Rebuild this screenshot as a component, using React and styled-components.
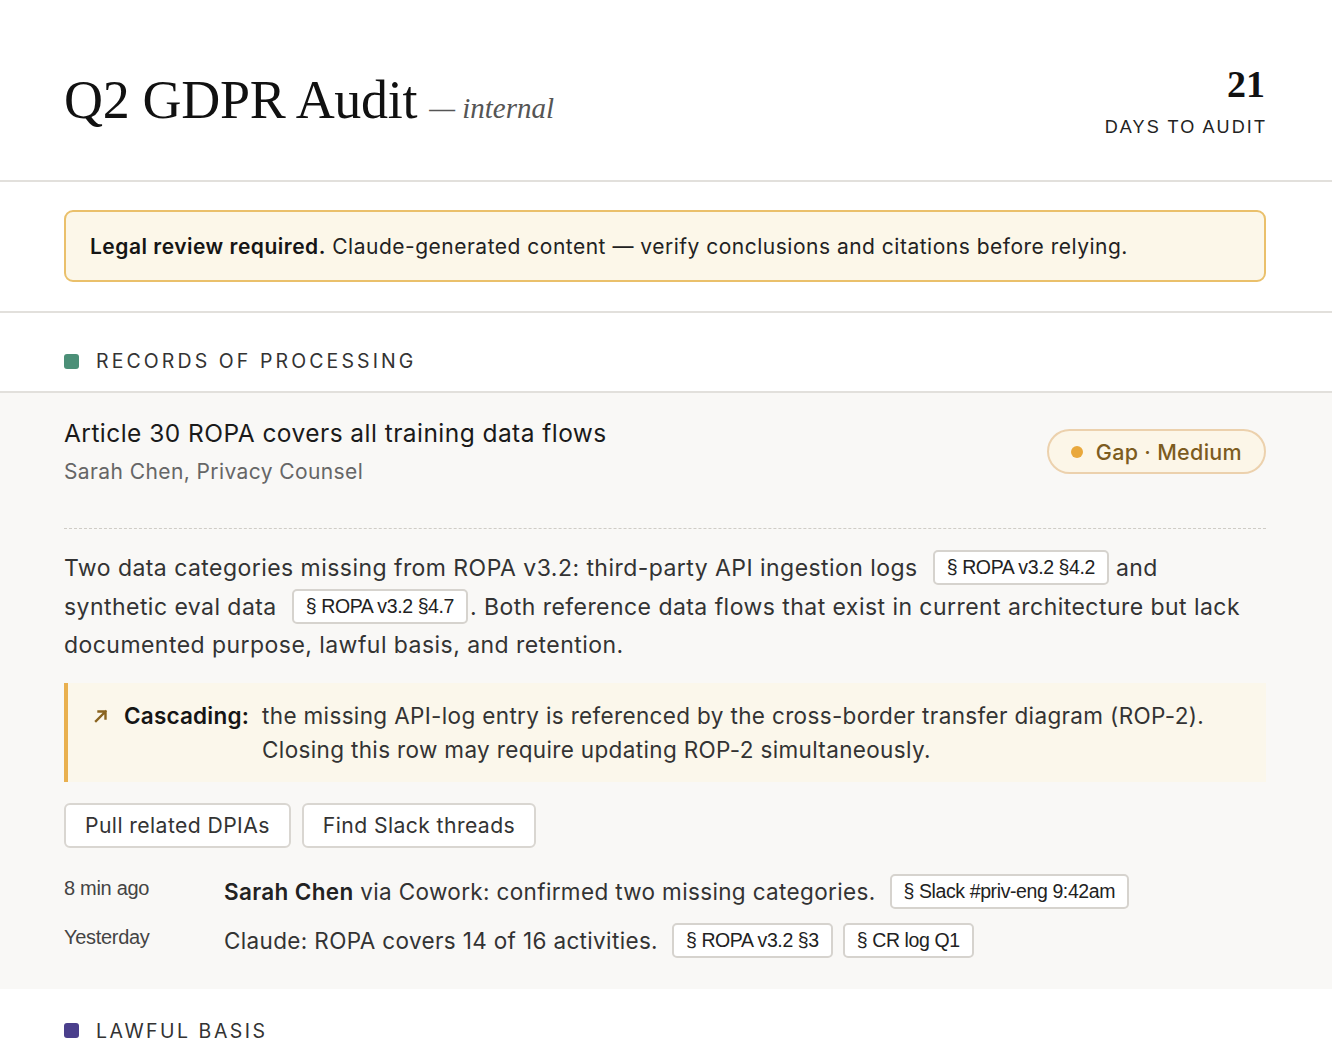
import React from "react";
import styled, { createGlobalStyle } from "styled-components";

const Global = createGlobalStyle`
  * { box-sizing: border-box; }
  html, body { margin: 0; padding: 0; background: #ffffff; }
  body {
    font-family: Inter, "Noto Sans", "Liberation Sans", sans-serif;
    color: #222;
    -webkit-font-smoothing: antialiased;
  }
`;

const Page = styled.div`
  width: 1332px;
  min-height: 1058px;
  overflow: hidden;
`;

const Header = styled.header`
  display: flex;
  justify-content: space-between;
  align-items: flex-start;
  padding: 65px 67px 42px 64px;
  border-bottom: 2px solid #e2e0dc;
`;

const Title = styled.h1`
  margin: 8px 0 0;
  font-family: Georgia, "Liberation Serif", "DejaVu Serif", serif;
  font-weight: 400;
  font-size: 54px;
  line-height: 1;
  color: #111;
  letter-spacing: -0.3px;
`;

const Sub = styled.span`
  font-style: italic;
  font-size: 29px;
  color: #555;
  margin-left: 12px;
  letter-spacing: 0;
`;

const Countdown = styled.div`
  display: flex;
  flex-direction: column;
  align-items: flex-end;
  gap: 14px;
`;

const Days = styled.div`
  font-family: Georgia, "Liberation Serif", serif;
  font-weight: 700;
  font-size: 38px;
  line-height: 1;
  color: #111;
`;

const DaysLabel = styled.div`
  font-family: "Liberation Sans", Arial, sans-serif;
  font-size: 18px;
  letter-spacing: 2.1px;
  margin-right: -2px;
  color: #222;
`;

const BannerWrap = styled.div`
  padding: 28px 66px 29px 64px;
  border-bottom: 2px solid #e2e0dc;
`;

const Banner = styled.div`
  height: 72px;
  display: flex;
  align-items: center;
  padding: 0 24px;
  background: #fcf7e9;
  border: 2px solid #eac06b;
  border-radius: 9px;
  font-size: 21px;
  letter-spacing: 0.5px;
  color: #222;
  b { font-weight: 600; color: #151515; }
`;

const SectionHead = styled.div`
  display: flex;
  align-items: center;
  gap: 17px;
  padding: ${(p) => p.$pt || 0}px 64px 0;
  height: ${(p) => p.$h || 80}px;
  border-bottom: ${(p) => (p.$line ? "2px solid #e2e0dc" : "none")};
  font-size: 19.5px;
  letter-spacing: ${(p) => p.$ls || 2.8}px;
  color: #333;
`;

const Swatch = styled.span`
  width: 15px;
  height: 15px;
  border-radius: 3px;
  background: ${(p) => p.$c};
  flex: none;
`;

const Body = styled.section`
  background: #f9f8f6;
  padding: 23px 66px 28px 64px;
`;

const ItemHead = styled.div`
  display: flex;
  justify-content: space-between;
  align-items: flex-start;
  padding-bottom: 44px;
  border-bottom: 1.5px dashed #cfccc6;
`;

const ItemTitle = styled.div`
  font-size: 24.5px;
  letter-spacing: 0.45px;
  color: #1a1a1a;
  line-height: 34px;
`;

const ItemOwner = styled.div`
  font-size: 21px;
  letter-spacing: 0.4px;
  color: #666;
  margin-top: 9px;
`;

const Pill = styled.div`
  display: flex;
  align-items: center;
  gap: 13px;
  height: 45px;
  margin-top: 13px;
  padding: 0 22px;
  border-radius: 23px;
  background: #fcf6e8;
  border: 2px solid #ecd1ad;
  font-size: 21.5px;
  letter-spacing: 0.3px;
  font-weight: 500;
  color: #7d5c1f;
`;

const Dot = styled.span`
  width: 12px;
  height: 12px;
  border-radius: 50%;
  background: #e9a83c;
`;

const Para = styled.p`
  margin: 20px 0 0;
  font-size: 23px;
  letter-spacing: 0.45px;
  line-height: 38.5px;
  color: #333;
`;

const Cite = styled.span`
  display: inline-flex;
  align-items: center;
  height: 35px;
  padding: 0 12px;
  margin: 0 ${(p) => p.$mr ?? 7}px 0 ${(p) => p.$ml ?? 15}px;
  background: #fff;
  border: 2px solid #d6d3ce;
  border-radius: 5px;
  font-family: "Liberation Sans", Arial, sans-serif;
  font-size: 19.5px;
  letter-spacing: -0.4px;
  color: #222;
  vertical-align: middle;
  position: relative;
  top: -2px;
`;

const Callout = styled.div`
  display: flex;
  align-items: flex-start;
  margin-top: 18px;
  padding: 16px 30px 15px 24px;
  background: #fbf7eb;
  border-left: 4px solid #e9b04f;
  font-size: 22.5px;
  letter-spacing: 0.35px;
  line-height: 34px;
  color: #333;
`;

const Arrow = styled.svg`
  width: 18px;
  height: 18px;
  flex: none;
  margin-top: 8px;
  margin-right: 14px;
`;

const Label = styled.span`
  font-weight: 600;
  color: #151515;
  flex: none;
  margin-right: 13px;
  letter-spacing: 0.2px;
`;

const Actions = styled.div`
  display: flex;
  gap: 11px;
  margin-top: 21px;
`;

const Btn = styled.button`
  height: 45px;
  padding: 0 19px;
  background: #fff;
  border: 2px solid #d9d6d1;
  border-radius: 6px;
  font-family: inherit;
  font-size: 21.2px;
  letter-spacing: 0.4px;
  color: #333;
`;

const Log = styled.div`
  display: grid;
  grid-template-columns: 160px 1fr;
  row-gap: 9px;
  margin-top: 24px;
`;

const When = styled.div`
  font-family: "Liberation Sans", Arial, sans-serif;
  font-size: 20px;
  letter-spacing: -0.3px;
  color: #444;
  line-height: 40px;
  margin-top: -4px;
`;

const What = styled.div`
  font-size: 22.5px;
  letter-spacing: 0.35px;
  color: #333;
  line-height: 40px;
  b { font-weight: 600; color: #222; }
`;

export default function App() {
  return (
    <Page>
      <Global />
      <Header>
        <Title>
          Q2 GDPR Audit<Sub>— internal</Sub>
        </Title>
        <Countdown>
          <Days>21</Days>
          <DaysLabel>DAYS TO AUDIT</DaysLabel>
        </Countdown>
      </Header>

      <BannerWrap>
        <Banner>
          <span>
            <b>Legal review required.</b> Claude-generated content — verify
            conclusions and citations before relying.
          </span>
        </Banner>
      </BannerWrap>

      <SectionHead $line $pt={18} $ls={3.1}>
        <Swatch $c="#4b8f77" />
        RECORDS OF PROCESSING
      </SectionHead>

      <Body>
        <ItemHead>
          <div>
            <ItemTitle>Article 30 ROPA covers all training data flows</ItemTitle>
            <ItemOwner>Sarah Chen, Privacy Counsel</ItemOwner>
          </div>
          <Pill>
            <Dot />
            Gap · Medium
          </Pill>
        </ItemHead>

        <Para>
          Two data categories missing from ROPA v3.2: third-party API ingestion
          logs<Cite>§ ROPA v3.2 §4.2</Cite>and synthetic eval data
          <Cite $mr={2}>§ ROPA v3.2 §4.7</Cite>. Both reference data flows that
          exist in current architecture but lack documented purpose, lawful
          basis, and retention.
        </Para>

        <Callout>
          <Arrow viewBox="0 0 18 18">
            <path
              d="M4 14 L13.5 4.5 M6.5 4.5 H13.5 V11.5"
              fill="none"
              stroke="#8a6420"
              strokeWidth="2.4"
              strokeLinecap="square"
            />
          </Arrow>
          <Label>Cascading:</Label>
          <span>
            the missing API-log entry is referenced by the cross-border transfer
            diagram (ROP-2). Closing this row may require updating ROP-2
            simultaneously.
          </span>
        </Callout>

        <Actions>
          <Btn>Pull related DPIAs</Btn>
          <Btn>Find Slack threads</Btn>
        </Actions>

        <Log>
          <When>8 min ago</When>
          <What>
            <b>Sarah Chen</b> via Cowork: confirmed two missing categories.
            <Cite $ml={14}>§ Slack #priv-eng 9:42am</Cite>
          </What>
          <When>Yesterday</When>
          <What>
            Claude: ROPA covers 14 of 16 activities.
            <Cite $ml={14} $mr={10}>§ ROPA v3.2 §3</Cite>
            <Cite $ml={0}>§ CR log Q1</Cite>
          </What>
        </Log>
      </Body>

      <SectionHead $h={84} $ls={2.5}>
        <Swatch $c="#4a3f8c" />
        LAWFUL BASIS
      </SectionHead>
    </Page>
  );
}
